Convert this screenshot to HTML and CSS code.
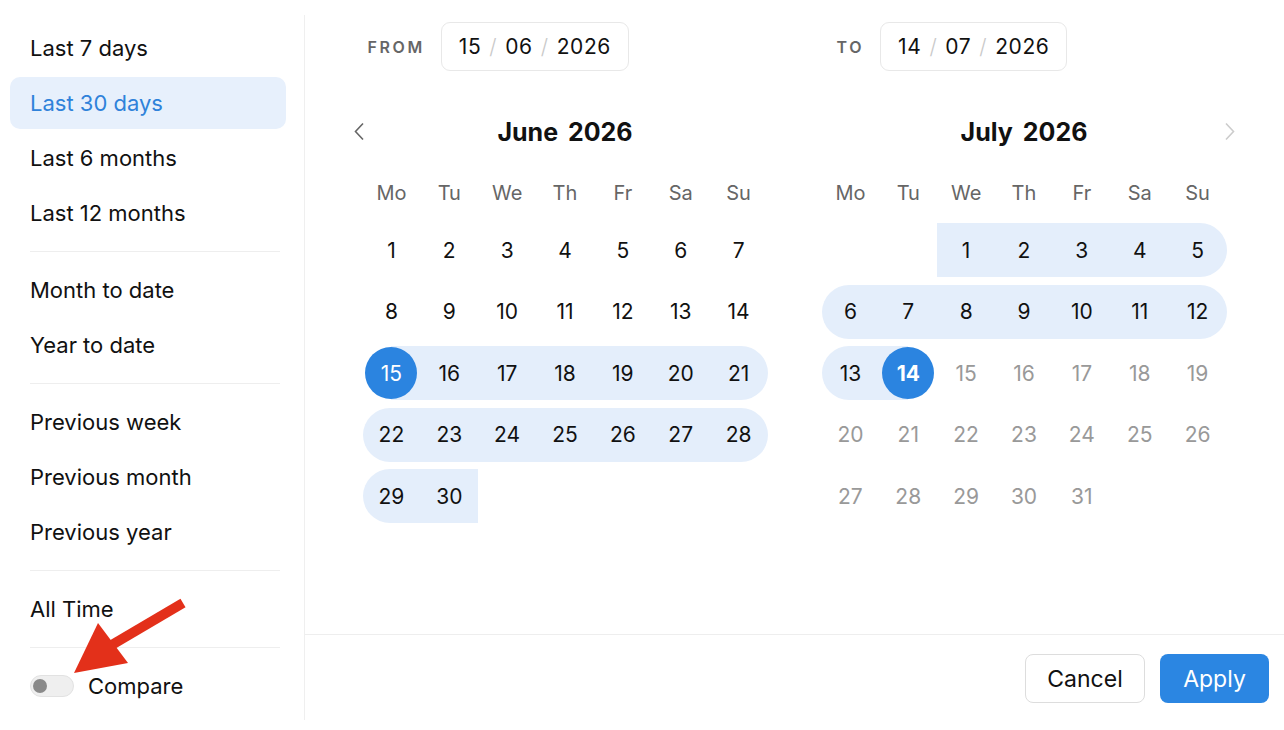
FILE: index.html
```html
<!DOCTYPE html>
<html lang="en">

<head>
    <meta charset="UTF-8">
    <meta name="viewport" content="width=device-width, initial-scale=1.0">
    <title>Date range</title>
    <link rel="stylesheet" href="styles.css">
</head>

<body>
    <div class="picker">
        <!-- preset ranges -->
        <aside class="presets">
            <div class="group">
                <div class="preset">Last 7 days</div>
                <div class="preset active">Last 30 days</div>
                <div class="preset">Last 6 months</div>
                <div class="preset">Last 12 months</div>
            </div>
            <hr class="sep">
            <div class="group">
                <div class="preset">Month to date</div>
                <div class="preset">Year to date</div>
            </div>
            <hr class="sep">
            <div class="group">
                <div class="preset">Previous week</div>
                <div class="preset">Previous month</div>
                <div class="preset">Previous year</div>
            </div>
            <hr class="sep">
            <div class="group">
                <div class="preset">All Time</div>
            </div>
            <hr class="sep">
            <label class="compare">
                <span class="toggle"><span class="knob"></span></span>
                Compare
            </label>
        </aside>

        <main class="main">
            <div class="calendars">
                <!-- June -->
                <section class="month">
                    <div class="field from">
                        <span class="field-label">FROM</span>
                        <div class="date-box">15<span class="slash">/</span>06<span class="slash">/</span>2026</div>
                    </div>
                    <div class="month-head">
                        <button class="nav prev">
                            <svg width="12" height="19" viewBox="0 0 12 19"><path d="M10 1.5 L2.5 9.5 L10 17.5" fill="none" stroke="#666" stroke-width="1.6"/></svg>
                        </button>
                        <h2>June 2026</h2>
                    </div>
                    <div class="weekdays">
                        <span>Mo</span><span>Tu</span><span>We</span><span>Th</span><span>Fr</span><span>Sa</span><span>Su</span>
                    </div>
                    <div class="days">
                        <div class="day"><span>1</span></div>
                        <div class="day"><span>2</span></div>
                        <div class="day"><span>3</span></div>
                        <div class="day"><span>4</span></div>
                        <div class="day"><span>5</span></div>
                        <div class="day"><span>6</span></div>
                        <div class="day"><span>7</span></div>
                        <div class="day"><span>8</span></div>
                        <div class="day"><span>9</span></div>
                        <div class="day"><span>10</span></div>
                        <div class="day"><span>11</span></div>
                        <div class="day"><span>12</span></div>
                        <div class="day"><span>13</span></div>
                        <div class="day"><span>14</span></div>
                        <div class="day start"><span>15</span></div>
                        <div class="day in"><span>16</span></div>
                        <div class="day in"><span>17</span></div>
                        <div class="day in"><span>18</span></div>
                        <div class="day in"><span>19</span></div>
                        <div class="day in"><span>20</span></div>
                        <div class="day in re"><span>21</span></div>
                        <div class="day in rs"><span>22</span></div>
                        <div class="day in"><span>23</span></div>
                        <div class="day in"><span>24</span></div>
                        <div class="day in"><span>25</span></div>
                        <div class="day in"><span>26</span></div>
                        <div class="day in"><span>27</span></div>
                        <div class="day in re"><span>28</span></div>
                        <div class="day in rs"><span>29</span></div>
                        <div class="day in"><span>30</span></div>
                    </div>
                </section>

                <!-- July -->
                <section class="month">
                    <div class="field to">
                        <span class="field-label">TO</span>
                        <div class="date-box">14<span class="slash">/</span>07<span class="slash">/</span>2026</div>
                    </div>
                    <div class="month-head">
                        <h2>July 2026</h2>
                        <button class="nav next">
                            <svg width="12" height="19" viewBox="0 0 12 19"><path d="M2 1.5 L9.5 9.5 L2 17.5" fill="none" stroke="#ccc" stroke-width="1.6"/></svg>
                        </button>
                    </div>
                    <div class="weekdays">
                        <span>Mo</span><span>Tu</span><span>We</span><span>Th</span><span>Fr</span><span>Sa</span><span>Su</span>
                    </div>
                    <div class="days">
                        <div class="day"></div>
                        <div class="day"></div>
                        <div class="day in"><span>1</span></div>
                        <div class="day in"><span>2</span></div>
                        <div class="day in"><span>3</span></div>
                        <div class="day in"><span>4</span></div>
                        <div class="day in re"><span>5</span></div>
                        <div class="day in rs"><span>6</span></div>
                        <div class="day in"><span>7</span></div>
                        <div class="day in"><span>8</span></div>
                        <div class="day in"><span>9</span></div>
                        <div class="day in"><span>10</span></div>
                        <div class="day in"><span>11</span></div>
                        <div class="day in re"><span>12</span></div>
                        <div class="day in rs"><span>13</span></div>
                        <div class="day end"><span>14</span></div>
                        <div class="day muted"><span>15</span></div>
                        <div class="day muted"><span>16</span></div>
                        <div class="day muted"><span>17</span></div>
                        <div class="day muted"><span>18</span></div>
                        <div class="day muted"><span>19</span></div>
                        <div class="day muted"><span>20</span></div>
                        <div class="day muted"><span>21</span></div>
                        <div class="day muted"><span>22</span></div>
                        <div class="day muted"><span>23</span></div>
                        <div class="day muted"><span>24</span></div>
                        <div class="day muted"><span>25</span></div>
                        <div class="day muted"><span>26</span></div>
                        <div class="day muted"><span>27</span></div>
                        <div class="day muted"><span>28</span></div>
                        <div class="day muted"><span>29</span></div>
                        <div class="day muted"><span>30</span></div>
                        <div class="day muted"><span>31</span></div>
                    </div>
                </section>
            </div>

            <footer class="actions">
                <button class="btn cancel">Cancel</button>
                <button class="btn apply">Apply</button>
            </footer>
        </main>

        <!-- red annotation arrow -->
        <svg class="annotation" width="1284" height="730" viewBox="0 0 1284 730">
            <line x1="183" y1="603" x2="110" y2="646" stroke="#e3301a" stroke-width="10"/>
            <polygon points="98,623 74,673 128,663" fill="#e3301a"/>
        </svg>
    </div>
</body>

</html>
```

FILE: styles.css
```css
* {
    box-sizing: border-box;
}

body {
    margin: 0;
    background-color: #fff;
    font-family: Inter, "Noto Sans", "Liberation Sans", sans-serif;
    color: #111;
}

.picker {
    position: relative;
    display: flex;
    width: 1284px;
    height: 730px;
    overflow: hidden;
}

/* preset list on the left */
.presets {
    width: 305px;
    margin: 15px 0 10px;
    padding: 7px 18px 0 10px;
    border-right: 1px solid #efefef;
}

.group {
    display: flex;
    flex-direction: column;
    gap: 3px;
}

.preset {
    height: 52px;
    display: flex;
    align-items: center;
    padding-left: 20px;
    border-radius: 10px;
    font-size: 22px;
}

.preset.active {
    background-color: #e7f0fc;
    color: #2f82da;
}

.sep {
    border: none;
    border-top: 1px solid #eeeeee;
    margin: 12px 6px 12px 20px;
}

.compare {
    height: 52px;
    margin-top: 2px;
    display: flex;
    align-items: center;
    gap: 14px;
    padding-left: 20px;
    font-size: 22px;
}

.toggle {
    width: 44px;
    height: 22px;
    border-radius: 11px;
    background-color: #efefef;
    border: 1px solid #e2e2e2;
    display: flex;
    align-items: center;
    padding-left: 2px;
}

.knob {
    width: 14px;
    height: 14px;
    border-radius: 50%;
    background-color: #8a8a8a;
}

/* calendars */
.main {
    flex: 1;
    display: flex;
    flex-direction: column;
}

.calendars {
    flex: 1;
    display: flex;
    justify-content: center;
    gap: 54px;
    padding-top: 22px;
}

.month {
    width: 405px;
}

.field {
    display: flex;
    align-items: center;
    gap: 16px;
    height: 49px;
}

.field.from {
    padding-left: 5px;
}

.field.to {
    padding-left: 15px;
}

.field-label {
    font-size: 16px;
    font-weight: 600;
    letter-spacing: 2.6px;
    color: #666;
}

.date-box {
    height: 49px;
    display: flex;
    align-items: center;
    padding: 0 17px;
    border: 1px solid #e8e8e8;
    border-radius: 9px;
    font-size: 21px;
    letter-spacing: 0.6px;
}

.slash {
    color: #c9c9c9;
    margin: 0 8px;
    font-weight: 300;
}

.month-head {
    position: relative;
    height: 48px;
    margin-top: 37px;
    display: flex;
    align-items: center;
    justify-content: center;
}

.month-head h2 {
    margin: 0;
    font-size: 25px;
    font-weight: 700;
    word-spacing: 4px;
}

.nav {
    position: absolute;
    top: 14px;
    background: none;
    border: none;
    padding: 0;
    width: 12px;
    height: 19px;
}

.nav.prev {
    left: -10px;
}

.nav.next {
    right: -9px;
}

.weekdays {
    display: grid;
    grid-template-columns: repeat(7, 1fr);
    height: 40px;
    margin-top: 17px;
    align-items: center;
    text-align: center;
    font-size: 20px;
    color: #666;
}

.days {
    display: grid;
    grid-template-columns: repeat(7, 1fr);
    grid-auto-rows: 54px;
    row-gap: 7.5px;
    margin-top: 10px;
}

.day {
    position: relative;
    display: flex;
    align-items: center;
    justify-content: center;
    font-size: 21px;
}

.day span {
    position: relative;
    z-index: 1;
}

.day.in::before,
.day.start::before,
.day.end::before {
    content: "";
    position: absolute;
    top: 0;
    bottom: 0;
    left: 0;
    right: 0;
    background-color: #e4eefb;
}

.day.start::before {
    left: 50%;
}

.day.end::before {
    right: 50%;
}

.day.rs::before {
    border-radius: 27px 0 0 27px;
}

.day.re::before {
    border-radius: 0 27px 27px 0;
}

.day.start span,
.day.end span {
    width: 52px;
    height: 52px;
    border-radius: 50%;
    background-color: #2b84e0;
    color: #fff;
    display: flex;
    align-items: center;
    justify-content: center;
}

.day.end span {
    font-weight: 700;
}

.day.muted {
    color: #999;
}

/* footer buttons */
.actions {
    height: 96px;
    border-top: 1px solid #eeeeee;
    display: flex;
    justify-content: flex-end;
    align-items: flex-start;
    gap: 15px;
    padding: 19px 15px 0 0;
}

.btn {
    height: 49px;
    border-radius: 8px;
    font-family: Inter, "Noto Sans", "Liberation Sans", sans-serif;
    font-size: 23px;
}

.cancel {
    width: 120px;
    background-color: #fff;
    border: 1px solid #dddddd;
    color: #111;
}

.apply {
    width: 109px;
    background-color: #2b86e2;
    border: none;
    color: #fff;
}

.annotation {
    position: absolute;
    left: 0;
    top: 0;
    pointer-events: none;
}
```
